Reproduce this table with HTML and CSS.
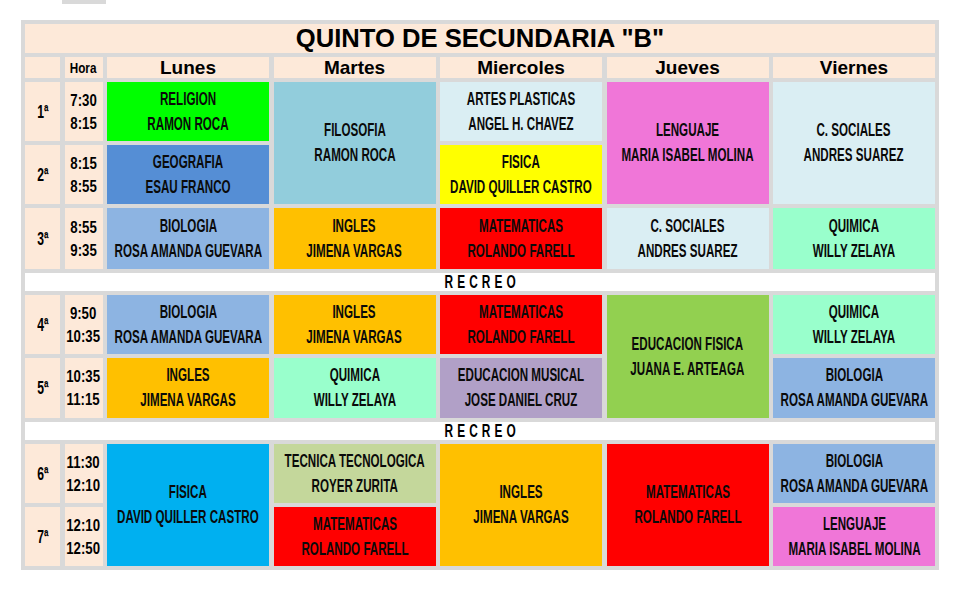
FILE: index.html
```html
<!DOCTYPE html>
<html lang="es">
<head>
<meta charset="utf-8">
<title>Quinto de Secundaria B</title>
<link rel="stylesheet" href="styles.css">
</head>
<body>
<div class="tab-stub"></div>
<div class="schedule">
  <div class="title">QUINTO DE SECUNDARIA "B"</div>

  <div class="hd"></div>
  <div class="hd"><span class="cx hora">Hora</span></div>
  <div class="hd day">Lunes</div>
  <div class="hd day">Martes</div>
  <div class="hd day">Miercoles</div>
  <div class="hd day">Jueves</div>
  <div class="hd day">Viernes</div>

  <div class="num"><span class="cx">1ª</span></div>
  <div class="time"><span class="cx">7:30<br>8:15</span></div>
  <div class="c green"><span class="cx">RELIGION<br>RAMON ROCA</span></div>
  <div class="c teal span2"><span class="cx">FILOSOFIA<br>RAMON ROCA</span></div>
  <div class="c pale"><span class="cx">ARTES PLASTICAS<br>ANGEL H. CHAVEZ</span></div>
  <div class="c pink span2"><span class="cx">LENGUAJE<br>MARIA ISABEL MOLINA</span></div>
  <div class="c pale span2"><span class="cx">C. SOCIALES<br>ANDRES SUAREZ</span></div>

  <div class="num"><span class="cx">2ª</span></div>
  <div class="time"><span class="cx">8:15<br>8:55</span></div>
  <div class="c blue"><span class="cx">GEOGRAFIA<br>ESAU FRANCO</span></div>
  <div class="c yellow"><span class="cx">FISICA<br>DAVID QUILLER CASTRO</span></div>

  <div class="num"><span class="cx">3ª</span></div>
  <div class="time"><span class="cx">8:55<br>9:35</span></div>
  <div class="c sky"><span class="cx">BIOLOGIA<br>ROSA AMANDA GUEVARA</span></div>
  <div class="c orange"><span class="cx">INGLES<br>JIMENA VARGAS</span></div>
  <div class="c red"><span class="cx">MATEMATICAS<br>ROLANDO FARELL</span></div>
  <div class="c pale"><span class="cx">C. SOCIALES<br>ANDRES SUAREZ</span></div>
  <div class="c mint"><span class="cx">QUIMICA<br>WILLY ZELAYA</span></div>

  <div class="recreo"><span class="cx">R E C R E O</span></div>

  <div class="num"><span class="cx">4ª</span></div>
  <div class="time"><span class="cx">9:50<br>10:35</span></div>
  <div class="c sky"><span class="cx">BIOLOGIA<br>ROSA AMANDA GUEVARA</span></div>
  <div class="c orange"><span class="cx">INGLES<br>JIMENA VARGAS</span></div>
  <div class="c red"><span class="cx">MATEMATICAS<br>ROLANDO FARELL</span></div>
  <div class="c lime span2"><span class="cx">EDUCACION FISICA<br>JUANA E. ARTEAGA</span></div>
  <div class="c mint"><span class="cx">QUIMICA<br>WILLY ZELAYA</span></div>

  <div class="num"><span class="cx">5ª</span></div>
  <div class="time"><span class="cx">10:35<br>11:15</span></div>
  <div class="c orange"><span class="cx">INGLES<br>JIMENA VARGAS</span></div>
  <div class="c mint"><span class="cx">QUIMICA<br>WILLY ZELAYA</span></div>
  <div class="c lilac"><span class="cx">EDUCACION MUSICAL<br>JOSE DANIEL CRUZ</span></div>
  <div class="c sky"><span class="cx">BIOLOGIA<br>ROSA AMANDA GUEVARA</span></div>

  <div class="recreo"><span class="cx">R E C R E O</span></div>

  <div class="num"><span class="cx">6ª</span></div>
  <div class="time"><span class="cx">11:30<br>12:10</span></div>
  <div class="c cyan span2"><span class="cx">FISICA<br>DAVID QUILLER CASTRO</span></div>
  <div class="c olive"><span class="cx">TECNICA TECNOLOGICA<br>ROYER ZURITA</span></div>
  <div class="c orange span2"><span class="cx">INGLES<br>JIMENA VARGAS</span></div>
  <div class="c red span2"><span class="cx">MATEMATICAS<br>ROLANDO FARELL</span></div>
  <div class="c sky"><span class="cx">BIOLOGIA<br>ROSA AMANDA GUEVARA</span></div>

  <div class="num"><span class="cx">7ª</span></div>
  <div class="time"><span class="cx">12:10<br>12:50</span></div>
  <div class="c red"><span class="cx">MATEMATICAS<br>ROLANDO FARELL</span></div>
  <div class="c pink"><span class="cx">LENGUAJE<br>MARIA ISABEL MOLINA</span></div>
</div>
</body>
</html>
```

FILE: styles.css
```css
html, body {
  margin: 0;
  padding: 0;
  background: #ffffff;
}

body {
  font-family: "Liberation Sans", Arial, sans-serif;
  color: #000;
}

.tab-stub {
  width: 44px;
  height: 4px;
  margin-left: 62px;
  background: #d9d9d9;
}

.schedule {
  margin: 16px 0 0 21px;
  width: 910px;
  padding: 4px;
  background: #d9d9d9;
  display: grid;
  grid-template-columns: 35px 38px repeat(5, 162px);
  grid-template-rows: 29px 21px 59px 59px 61px 18px 59px 60px 18px 59px 59px;
  column-gap: 4.5px;
  row-gap: 4px;
}

.title {
  grid-column: 1 / -1;
  background: #fde9d9;
  display: flex;
  align-items: center;
  justify-content: center;
  font-weight: bold;
  font-size: 25.6px;
  line-height: 1;
}

.hd {
  background: #fde9d9;
  display: flex;
  align-items: center;
  justify-content: center;
}

.day {
  font-weight: bold;
  font-size: 19px;
  line-height: 1;
}

.cx {
  display: inline-block;
  white-space: nowrap;
  text-align: center;
  font-weight: bold;
  transform: scaleX(0.68);
  transform-origin: center;
}

.hora {
  font-size: 15px;
  transform: scaleX(0.78);
}

.num, .time {
  background: #fde9d9;
  display: flex;
  align-items: center;
  justify-content: center;
}

.num .cx {
  font-size: 19px;
  transform: scaleX(0.64);
}

.time .cx {
  font-size: 16.5px;
  line-height: 23px;
  transform: scaleX(0.8);
}

.c {
  display: flex;
  align-items: center;
  justify-content: center;
  min-width: 0;
}

.c .cx {
  font-size: 18px;
  line-height: 25px;
  color: #0a0a0a;
  transform: scaleX(0.645);
}

.span2 {
  grid-row: span 2;
}

.recreo {
  grid-column: 1 / -1;
  background: #ffffff;
  display: flex;
  align-items: center;
  justify-content: center;
}

.recreo .cx {
  font-size: 18px;
  letter-spacing: 0.6px;
  transform: scaleX(0.66);
  line-height: 1;
}

.green  { background: #00ff00; }
.teal   { background: #92cddc; }
.pale   { background: #daeef3; }
.pink   { background: #f076d8; }
.blue   { background: #558ed5; }
.yellow { background: #ffff00; }
.sky    { background: #8db4e2; }
.orange { background: #ffc000; }
.red    { background: #ff0000; }
.mint   { background: #99ffcc; }
.lime   { background: #92d050; }
.lilac  { background: #b1a0c7; }
.cyan   { background: #00b0f0; }
.olive  { background: #c4d79b; }
```
